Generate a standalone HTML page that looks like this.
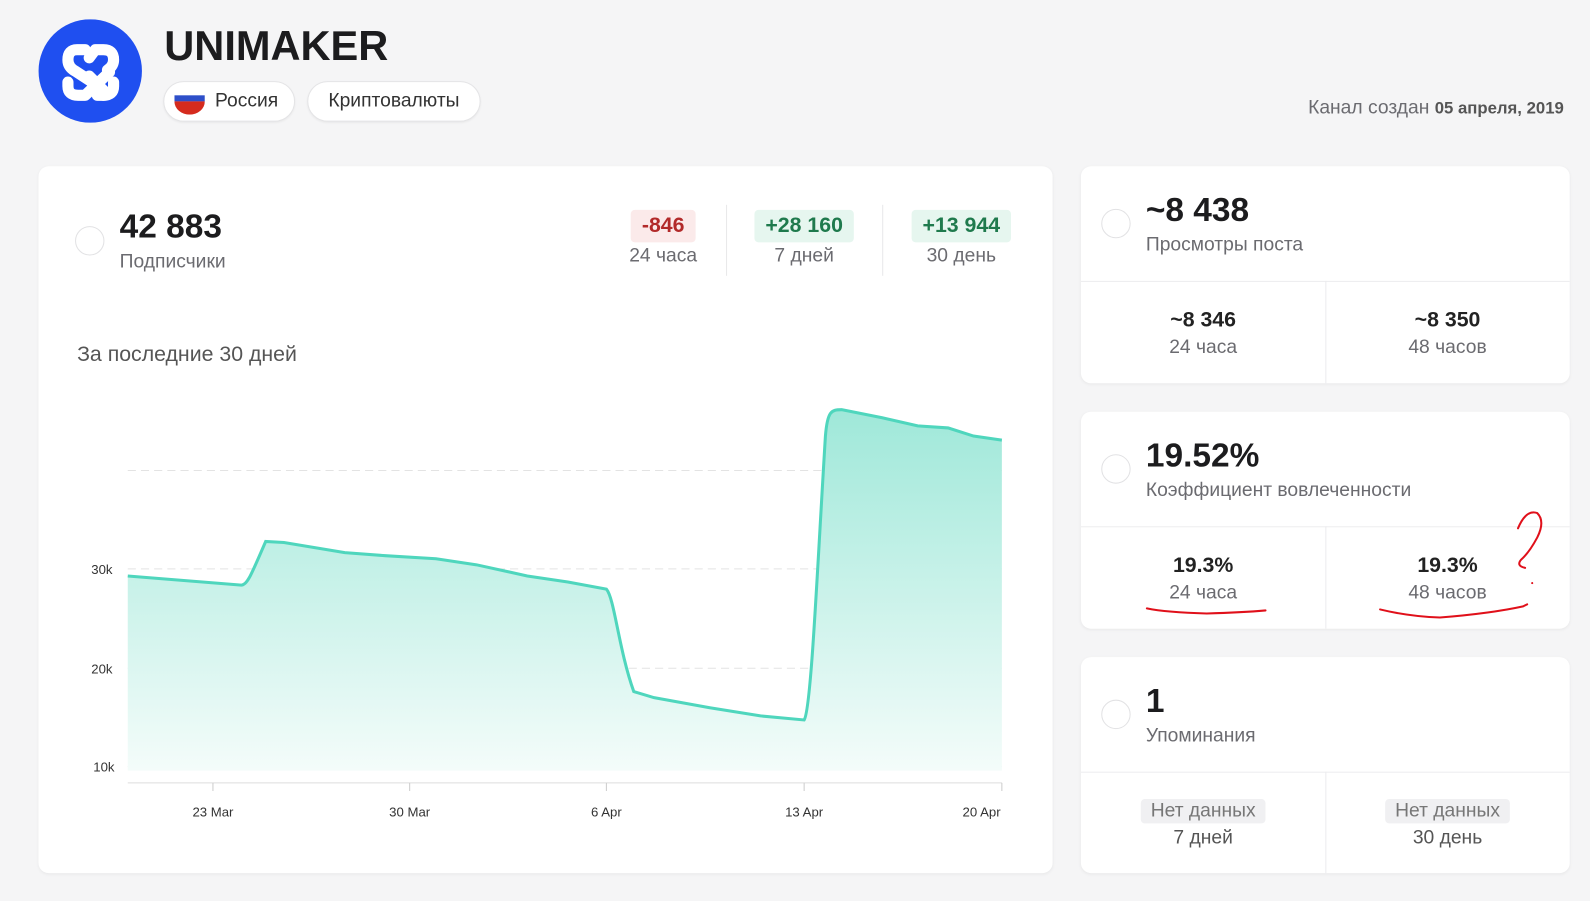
<!DOCTYPE html>
<html><head><meta charset="utf-8"><style>
*{margin:0;padding:0;box-sizing:border-box}
body{width:1590px;height:901px;background:#f5f5f6;font-family:"Liberation Sans","Noto Sans CJK SC",sans-serif;overflow:hidden;color:#1c1c1e}
#w{position:absolute;left:0;top:0;width:1568px;height:889px;transform:scale(1.01403);transform-origin:0 0}
.abs{position:absolute}
.card{position:absolute;background:#fff;border-radius:10px;box-shadow:0 1px 3px rgba(0,0,0,.05)}
.pill{position:absolute;top:80px;height:40px;border:1px solid #e4e4e6;border-radius:20px;background:#fff;font-size:19px;color:#333;line-height:38px;box-shadow:0 1px 2px rgba(0,0,0,.06)}
.circ{position:absolute;width:29px;height:29px;border-radius:50%;border:1px solid #e2e2e4;background:#fff}
.big{font-size:33px;font-weight:bold}
.lbl{font-size:19px;color:#6b6b70}
.cell{position:absolute;text-align:center}
.cell b{display:block;font-size:21px;color:#222}
.cell span{display:block;font-size:19px;color:#6b6b70;margin-top:4px}
.badge{display:inline-block;padding:0 11px;height:32px;line-height:32px;border-radius:4px;font-size:21px;font-weight:bold}
</style></head><body><div id="w">
<svg class="abs" style="left:38px;top:19px" width="102" height="102" viewBox="0 0 102 102">
<circle cx="51" cy="51" r="51" fill="#1f4ff0"/>
<g fill="none" stroke="#fff" stroke-width="11" stroke-linecap="round" stroke-linejoin="round">
<path d="M46 30 H38 Q29 30 29 40 Q29 47 36 51 L56 64"/>
<path d="M29 62 V66 Q29 75 39 75 H46 L70 52"/>
<path d="M50 38 L56 30 H64 Q74 30 74 40 Q74 46 68 50"/>
<path d="M50 56 L66 72 Q70 75 64 75"/>
<path d="M74 62 V66 Q74 75 64 75 H58"/>
</g></svg>
<div class="abs" style="left:162px;top:22px;font-size:41px;font-weight:bold;color:#1c1c1e">UNIMAKER</div>
<div class="pill" style="left:161px;width:130px;padding-left:50px">Россия</div>
<svg class="abs" style="left:172px;top:89px" width="30" height="24" viewBox="0 0 30 24"><rect x="0" y="2" width="30" height="3" fill="#fff"/><rect x="0" y="5" width="30" height="6" fill="#2e4fc9"/><path d="M0 11 H30 A15 13 0 0 1 0 11Z" fill="#d52b1e"/></svg>
<div class="pill" style="left:303px;width:171px;text-align:center">Криптовалюты</div>
<div class="abs" style="left:1290px;top:96px;font-size:19px;color:#6b6b70">Канал создан <b style="font-size:16.5px;color:#555">05 апреля, 2019</b></div>

<div class="card" style="left:38px;top:164px;width:1000px;height:697px"></div>
<div class="circ" style="left:74px;top:223px"></div>
<div class="abs big" style="left:118px;top:204px">42 883</div>
<div class="abs lbl" style="left:118px;top:248px">Подписчики</div>
<div class="cell" style="left:600px;top:207px;width:108px"><div class="badge" style="background:#fbeaea;color:#b22a2a">-846</div><span style="font-size:19px;margin-top:3px">24 часа</span></div>
<div class="abs" style="left:716px;top:202px;width:1px;height:70px;background:#e8e8ea"></div>
<div class="cell" style="left:724px;top:207px;width:138px"><div class="badge" style="background:#e6f6ef;color:#1f7a4d">+28 160</div><span style="font-size:19px;margin-top:3px">7 дней</span></div>
<div class="abs" style="left:870px;top:202px;width:1px;height:70px;background:#e8e8ea"></div>
<div class="cell" style="left:880px;top:207px;width:136px"><div class="badge" style="background:#e6f6ef;color:#1f7a4d">+13 944</div><span style="font-size:19px;margin-top:3px">30 день</span></div>
<div class="abs" style="left:76px;top:338px;font-size:21px;color:#555">За последние 30 дней</div>

<svg class="abs" style="left:0;top:0" width="1040" height="860">
<defs><linearGradient id="g" x1="0" y1="0" x2="0" y2="1"><stop offset="0" stop-color="#9fe8d9"/><stop offset="1" stop-color="#f4fcfa"/></linearGradient></defs>
<g stroke="#e3e3e3" stroke-dasharray="8 5"><line x1="126" y1="464" x2="988" y2="464"/><line x1="126" y1="561" x2="988" y2="561"/><line x1="126" y1="659" x2="988" y2="659"/><line x1="126" y1="756" x2="988" y2="756"/></g>
<path d="M126 568 L238 577 C244 577 248 566 262 534 L280 535 L340 545 L380 548 L430 551 L470 557 L520 568 L560 574 L598 581 C606 590 610 640 625 682 L645 688 L700 698 L750 706 L793 710 C800 700 806 560 814 430 C816 405 820 404 830 404 L870 412 L905 420 L935 422 L960 430 L988 434 L988 760 L126 760Z" fill="url(#g)"/>
<path d="M126 568 L238 577 C244 577 248 566 262 534 L280 535 L340 545 L380 548 L430 551 L470 557 L520 568 L560 574 L598 581 C606 590 610 640 625 682 L645 688 L700 698 L750 706 L793 710 C800 700 806 560 814 430 C816 405 820 404 830 404 L870 412 L905 420 L935 422 L960 430 L988 434" fill="none" stroke="#4fd6bd" stroke-width="3"/>
<line x1="126" y1="772" x2="988" y2="772" stroke="#ddd"/>
<g stroke="#ccc"><line x1="210" y1="772" x2="210" y2="780"/><line x1="404" y1="772" x2="404" y2="780"/><line x1="598" y1="772" x2="598" y2="780"/><line x1="793" y1="772" x2="793" y2="780"/><line x1="988" y1="772" x2="988" y2="780"/></g>
<g font-family="Liberation Sans, sans-serif" font-size="13" fill="#333"><text x="90" y="566">30k</text><text x="90" y="664">20k</text><text x="92" y="761">10k</text>
<g text-anchor="middle"><text x="210" y="805">23 Mar</text><text x="404" y="805">30 Mar</text><text x="598" y="805">6 Apr</text><text x="793" y="805">13 Apr</text><text x="968" y="805">20 Apr</text></g></g>
</svg>

<div class="card" style="left:1066px;top:164px;width:482px;height:214px"></div>
<div class="circ" style="left:1086px;top:206px"></div>
<div class="abs big" style="left:1130px;top:188px">~8 438</div>
<div class="abs lbl" style="left:1130px;top:231px">Просмотры поста</div>
<div class="abs" style="left:1066px;top:277px;width:482px;height:1px;background:#ececee"></div>
<div class="abs" style="left:1307px;top:277px;width:1px;height:101px;background:#ececee"></div>
<div class="cell" style="left:1066px;top:304px;width:241px"><b>~8 346</b><span>24 часа</span></div>
<div class="cell" style="left:1307px;top:304px;width:241px"><b>~8 350</b><span>48 часов</span></div>

<div class="card" style="left:1066px;top:406px;width:482px;height:214px"></div>
<div class="circ" style="left:1086px;top:448px"></div>
<div class="abs big" style="left:1130px;top:430px">19.52%</div>
<div class="abs lbl" style="left:1130px;top:473px">Коэффициент вовлеченности</div>
<div class="abs" style="left:1066px;top:519px;width:482px;height:1px;background:#ececee"></div>
<div class="abs" style="left:1307px;top:519px;width:1px;height:101px;background:#ececee"></div>
<div class="cell" style="left:1066px;top:546px;width:241px"><b>19.3%</b><span>24 часа</span></div>
<div class="cell" style="left:1307px;top:546px;width:241px"><b>19.3%</b><span>48 часов</span></div>

<div class="card" style="left:1066px;top:648px;width:482px;height:213px"></div>
<div class="circ" style="left:1086px;top:690px"></div>
<div class="abs big" style="left:1130px;top:672px">1</div>
<div class="abs lbl" style="left:1130px;top:715px">Упоминания</div>
<div class="abs" style="left:1066px;top:761px;width:482px;height:1px;background:#ececee"></div>
<div class="abs" style="left:1307px;top:761px;width:1px;height:100px;background:#ececee"></div>
<div class="cell" style="left:1066px;top:788px;width:241px"><div style="display:inline-block;background:#f0f0f2;color:#777;font-size:19px;padding:1px 10px;border-radius:4px">Нет данных</div><span style="margin-top:4px;color:#555">7 дней</span></div>
<div class="cell" style="left:1307px;top:788px;width:241px"><div style="display:inline-block;background:#f0f0f2;color:#777;font-size:19px;padding:1px 10px;border-radius:4px">Нет данных</div><span style="margin-top:4px;color:#555">30 день</span></div>

<svg class="abs" style="left:0;top:0" width="1568" height="889"><g fill="none" stroke="#e0101a" stroke-width="2" stroke-linecap="round">
<path d="M1131 600 Q1150 604 1190 605 Q1225 604 1248 602"/>
<path d="M1361 601 Q1390 608 1420 609 Q1470 605 1502 598 L1506 596"/>
<path d="M1497 521 Q1505 502 1516 506 Q1524 514 1516 530 Q1508 545 1500 552 Q1495 558 1504 560"/>
</g><circle cx="1511" cy="575" r="1" fill="#e0101a"/></svg>
</div></body></html>
